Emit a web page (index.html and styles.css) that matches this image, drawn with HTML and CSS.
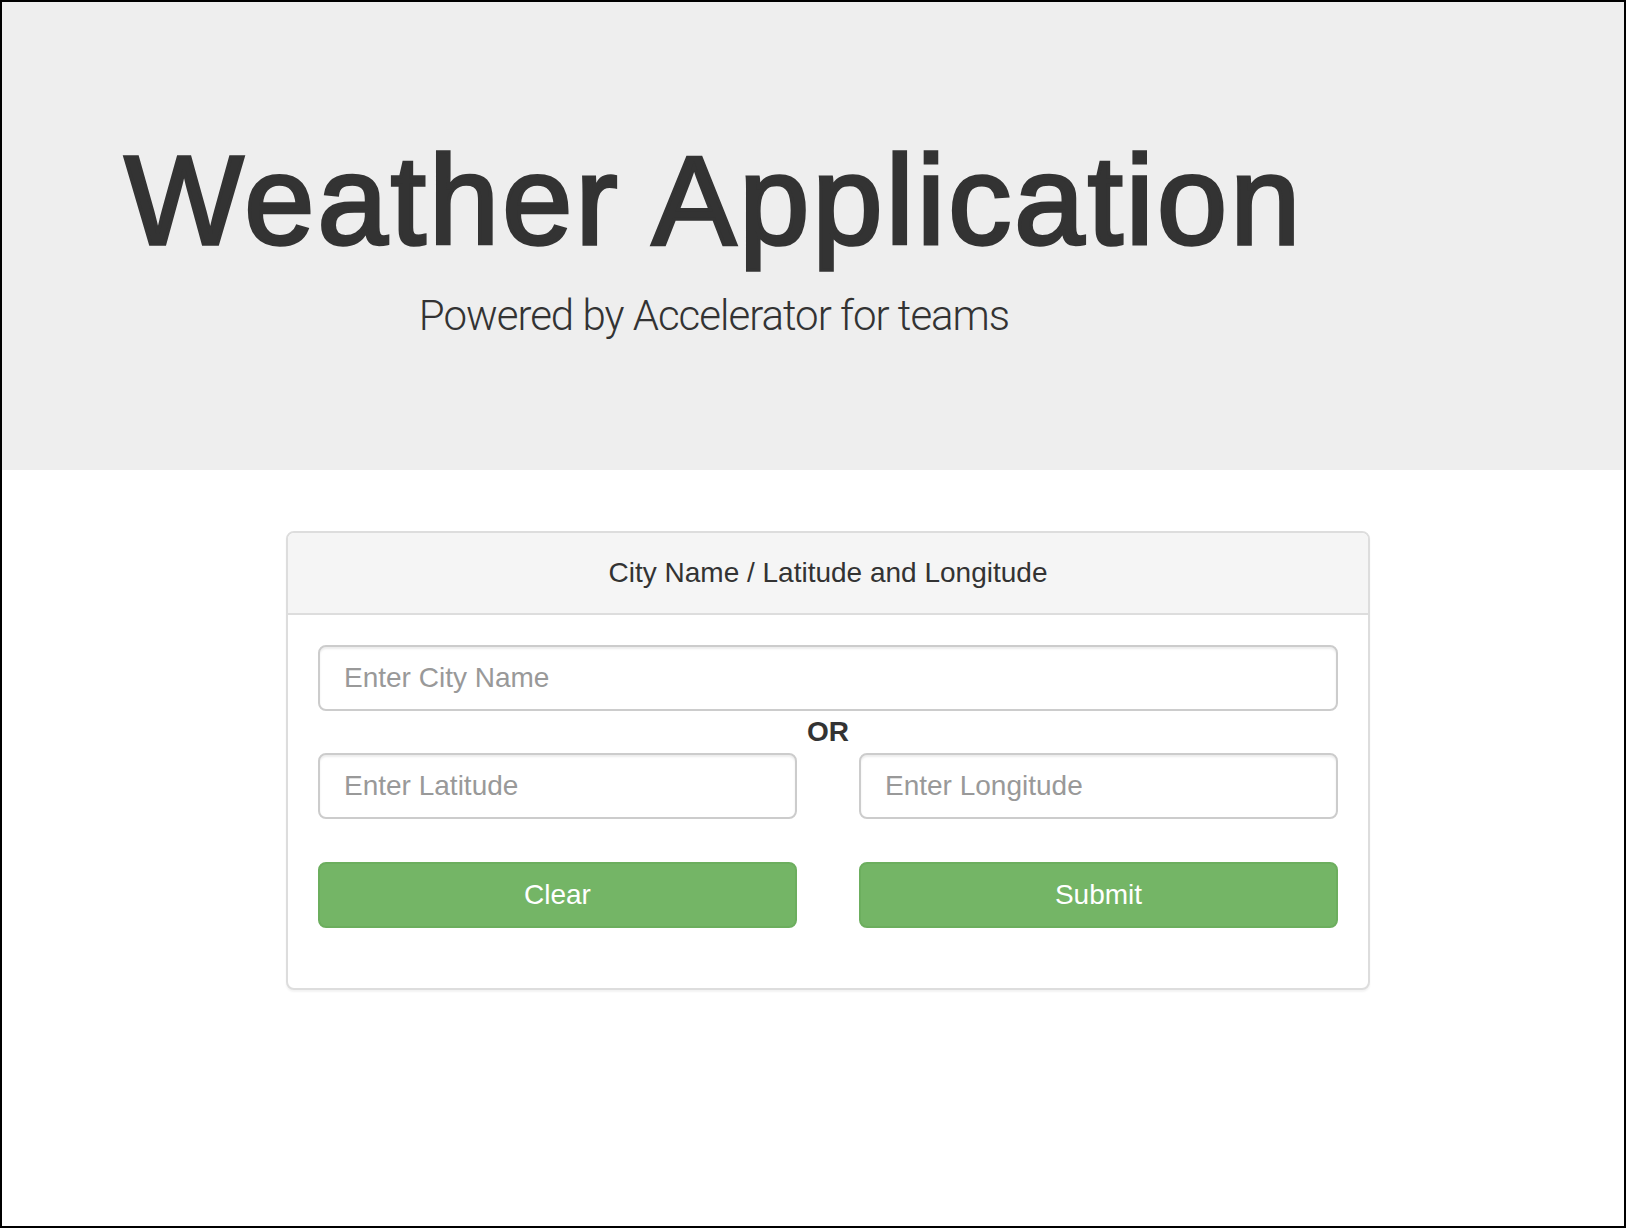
FILE: index.html
```html
<!DOCTYPE html>
<html lang="en">
<head>
<meta charset="utf-8">
<title>Weather Application</title>
<link rel="stylesheet" href="styles.css">
</head>
<body>
<div class="frame">
  <header class="jumbotron">
    <h1 class="title">Weather Application</h1>
    <p class="subtitle">Powered by Accelerator for teams</p>
  </header>
  <main class="content">
    <section class="panel">
      <div class="panel-heading">City Name / Latitude and Longitude</div>
      <div class="panel-body">
        <input class="field" type="text" placeholder="Enter City Name">
        <div class="or">OR</div>
        <div class="pair">
          <input class="field" type="text" placeholder="Enter Latitude">
          <input class="field" type="text" placeholder="Enter Longitude">
        </div>
        <div class="pair actions">
          <button class="btn" type="button">Clear</button>
          <button class="btn" type="button">Submit</button>
        </div>
      </div>
    </section>
  </main>
</div>
</body>
</html>
```
FILE: styles.css
```css
html, body {
  margin: 0;
  padding: 0;
  background: #fff;
}
body {
  font-family: "Liberation Sans", Arial, sans-serif;
  color: #333;
}
.frame {
  box-sizing: border-box;
  width: 1626px;
  height: 1228px;
  border: 2px solid #000;
  overflow: hidden;
}
.jumbotron {
  background: #eee;
  padding: 130px 198px 125px 0;
  text-align: center;
}
.title {
  margin: 0;
  font-size: 126px;
  line-height: 1.1;
  font-weight: 400;
  letter-spacing: 3.2px;
  -webkit-text-stroke: 3.5px #333;
  color: #333;
}
.subtitle {
  margin: 16px 0 0;
  font-family: Roboto, "Liberation Sans", sans-serif;
  font-size: 42px;
  line-height: 1.4;
  font-weight: 300;
  letter-spacing: -1px;
  color: #333;
}
.content {
  padding: 61px 0 0 284px;
}
.panel {
  width: 1084px;
  box-sizing: border-box;
  border: 2px solid #ddd;
  border-radius: 8px;
  background: #fff;
  box-shadow: 0 2px 2px rgba(0,0,0,0.05);
}
.panel-heading {
  background: #f5f5f5;
  border-bottom: 2px solid #ddd;
  border-radius: 6px 6px 0 0;
  padding: 20px 30px;
  font-size: 28px;
  line-height: 40px;
  text-align: center;
  color: #333;
}
.panel-body {
  padding: 30px 30px 60px;
  display: flex;
  flex-direction: column;
}
.field {
  box-sizing: border-box;
  width: 100%;
  height: 66px;
  padding: 0 24px;
  border: 2px solid #ccc;
  border-radius: 8px;
  background: #fff;
  box-shadow: inset 0 2px 2px rgba(0,0,0,0.075);
  font-family: "Liberation Sans", Arial, sans-serif;
  font-size: 28px;
  color: #555;
  outline: none;
}
.field::placeholder {
  color: #999;
}
.or {
  font-size: 28px;
  line-height: 42px;
  font-weight: 700;
  text-align: center;
  color: #333;
}
.pair {
  display: grid;
  grid-template-columns: 1fr 1fr;
  column-gap: 62px;
}
.actions {
  margin-top: 43px;
}
.btn {
  box-sizing: border-box;
  height: 66px;
  border: 2px solid #6cae5e;
  border-radius: 8px;
  background: #74b566;
  color: #fff;
  font-family: "Liberation Sans", Arial, sans-serif;
  font-size: 28px;
  cursor: pointer;
}
```
